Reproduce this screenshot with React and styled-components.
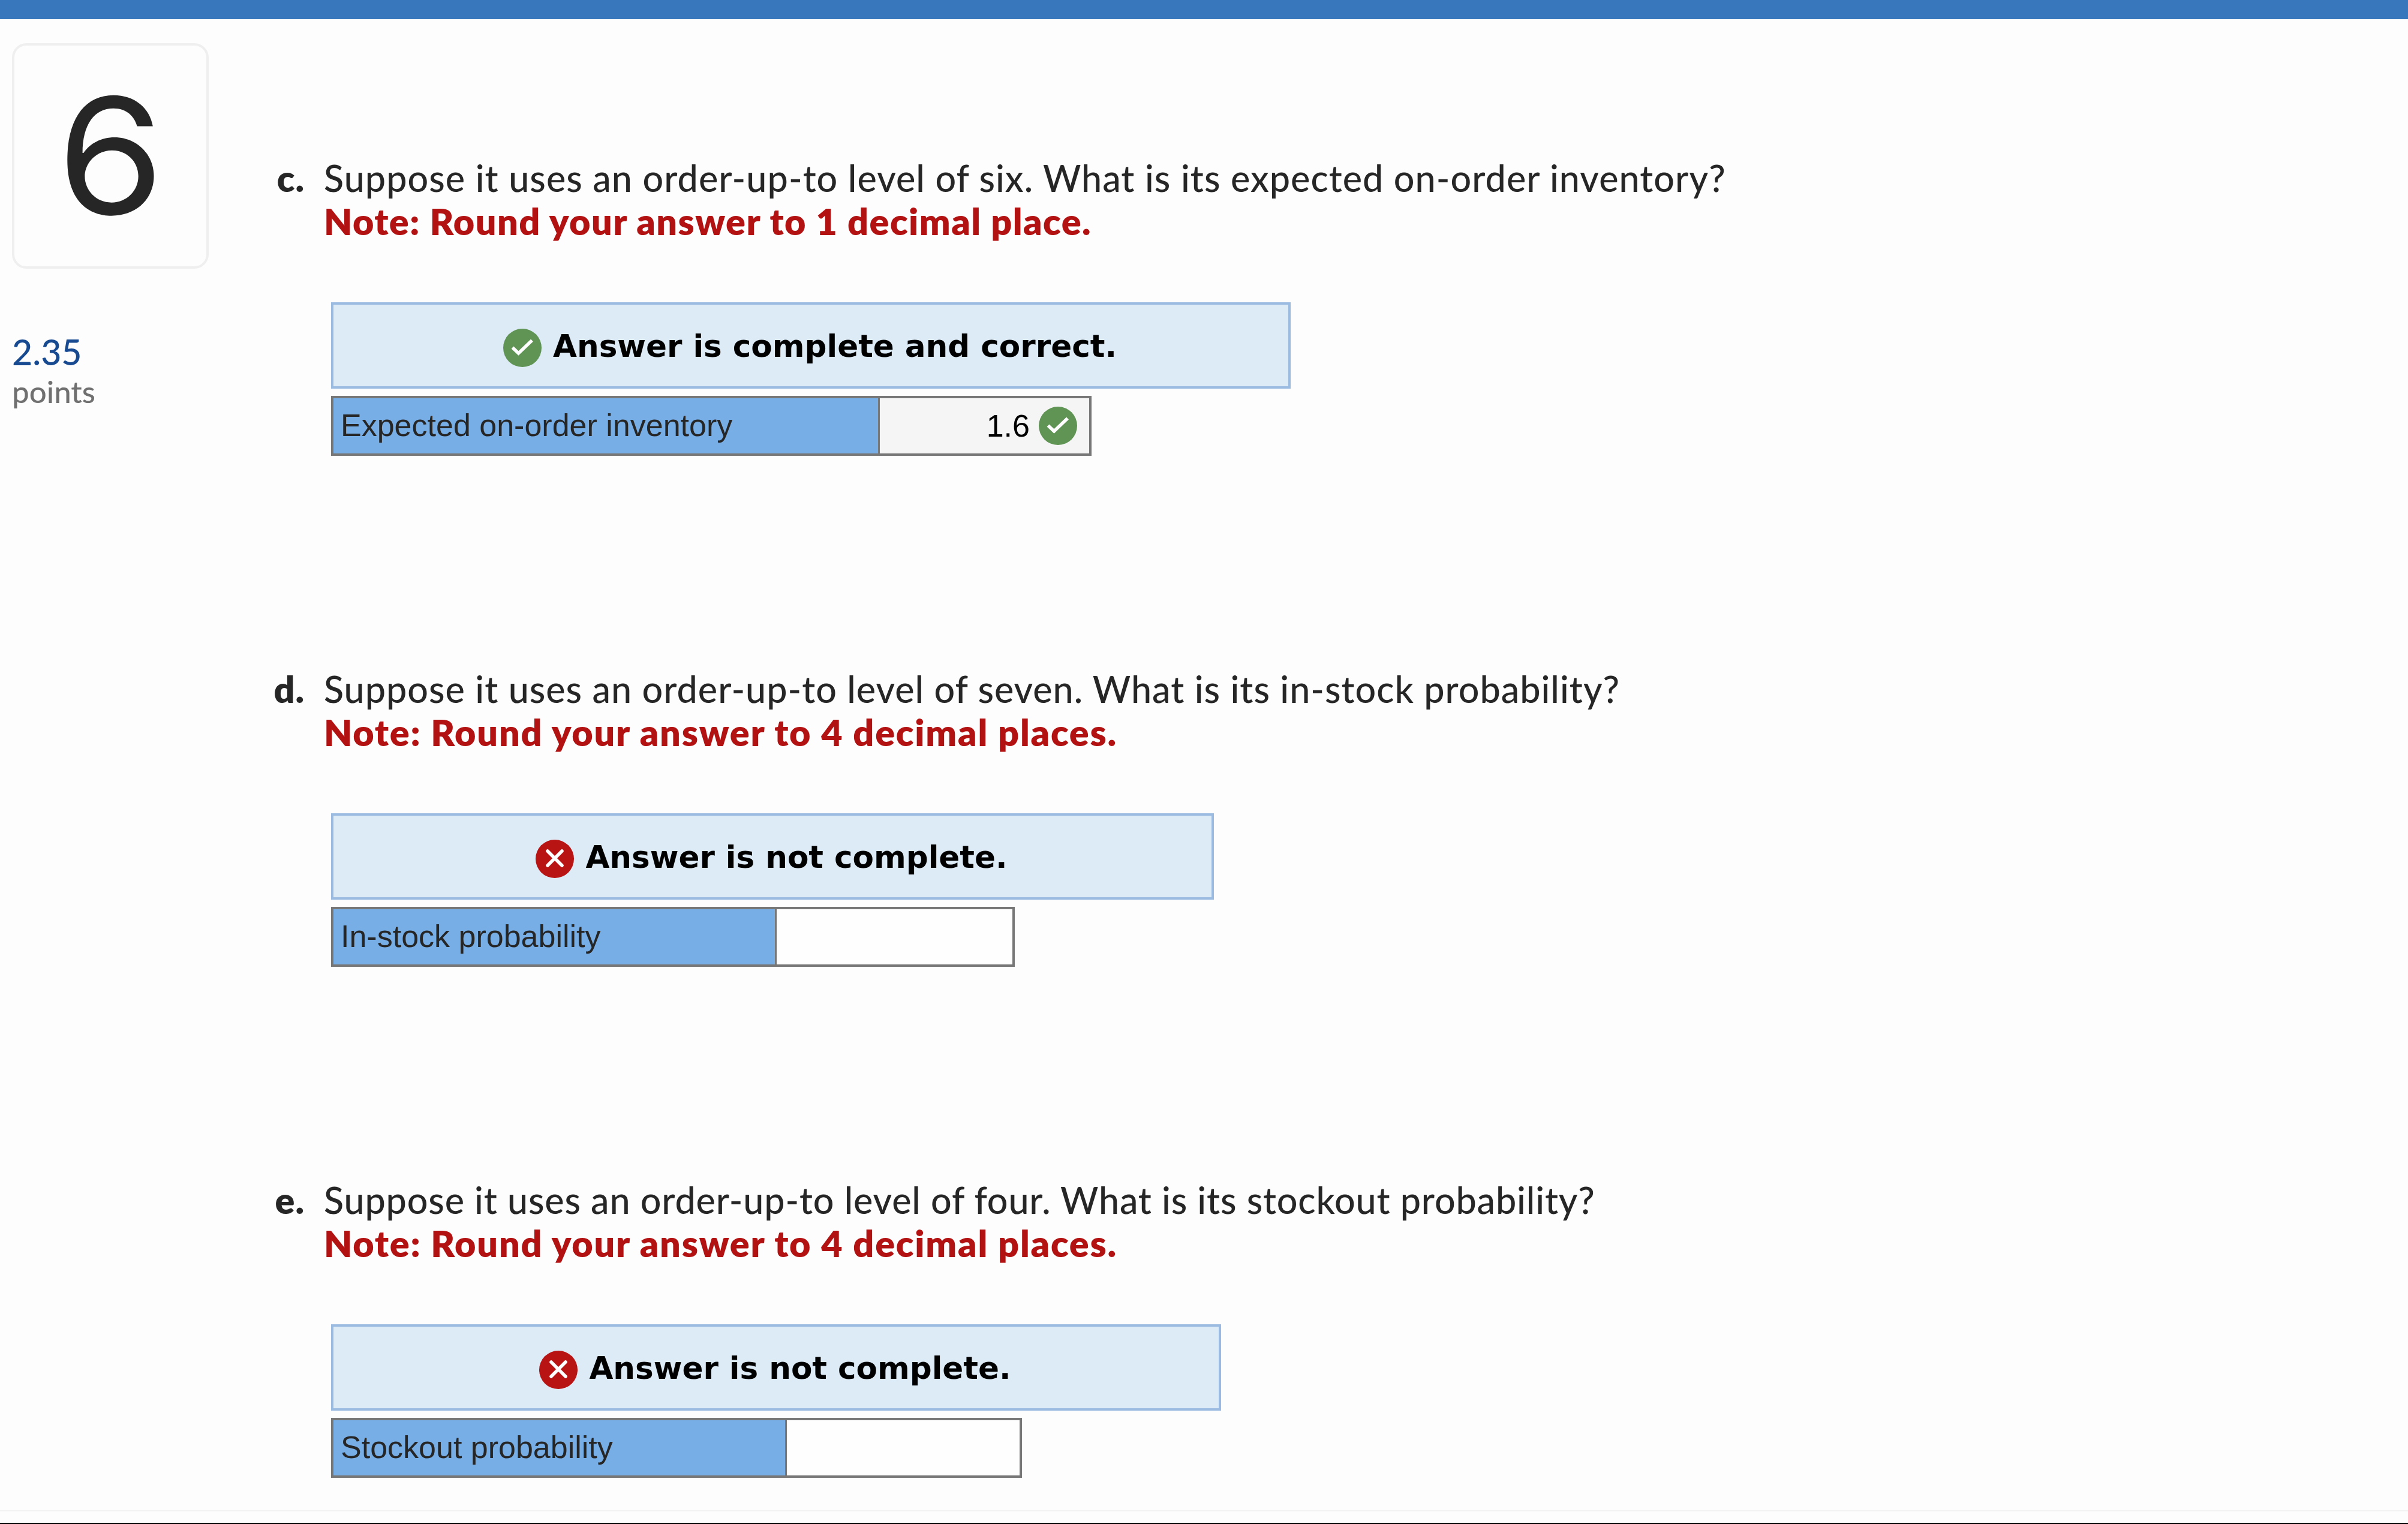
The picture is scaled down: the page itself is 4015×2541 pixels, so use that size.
import React, { Fragment } from 'react';
import styled, { createGlobalStyle } from 'styled-components';

const GlobalStyle = createGlobalStyle`
  body {
    margin: 0;
    background-color: #fdfdfd;
  }
`;

const Page = styled.div`
  box-sizing: border-box;
  display: flex;
  flex-direction: column;
  width: 4015px;
  height: 2541px;
  overflow: hidden;
  color: #262626;
  font-family: Lato, 'Open Sans', sans-serif;
`;

const TopBar = styled.div`
  flex: none;
  height: 32px;
  background-color: #3877bc;
`;

const Content = styled.div`
  display: flex;
  flex: none;
  box-sizing: border-box;
  height: 2488px;
  padding-left: 20px;
  border-bottom: 2px solid #f2f2f2;
`;

const BottomEdge = styled.div`
  flex: none;
  height: 2px;
  margin-top: 19px;
  background-color: #000;
`;

const Sidebar = styled.div`
  width: 328px;
  padding-top: 40px;
`;

const QuestionNumber = styled.div`
  box-sizing: border-box;
  height: 376px;
  border: 4px solid #efefef;
  border-radius: 24px;
  font-family: Inter, sans-serif;
  font-size: 269px;
  line-height: 366px;
  text-align: center;
`;

const Digit = styled.span`
  display: inline-block;
  transform: scaleX(1.07);
`;

const Points = styled.div`
  margin-top: 103px;
  color: #174a91;
  font-size: 59px;
  font-weight: 500;
  line-height: 72px;
`;

const PointsLabel = styled.div`
  margin-top: -1px;
  color: #707070;
  font-size: 51px;
  font-weight: 500;
  line-height: 62px;
`;

const Questions = styled.div`
  padding-top: 229px;
`;

const Question = styled.div`
  display: grid;
  grid-template-columns: 160px auto;
  column-gap: 32px;
  height: 852px;
  align-content: start;
`;

const Letter = styled.div`
  font-size: 61px;
  font-weight: 800;
  line-height: 72px;
  letter-spacing: 1px;
  text-align: right;
`;

const QuestionText = styled.div`
  font-size: 61px;
  font-weight: 500;
  line-height: 72px;
  letter-spacing: ${props => props.spacing}px;
  white-space: nowrap;
`;

const Note = styled(QuestionText)`
  color: #b31212;
  font-weight: 800;
`;

const Answer = styled.div`
  margin: 99px 0 0 12px;
`;

const Alert = styled.div`
  box-sizing: border-box;
  display: flex;
  align-items: center;
  justify-content: center;
  gap: 19px;
  width: ${props => props.width}px;
  height: 144px;
  padding: 8px 3px 0 0;
  border: 4px solid #9bbce0;
  background-color: #ddebf7;
`;

const AlertText = styled.div`
  margin-top: -7px;
  color: #000;
  font-family: 'DejaVu Sans', Verdana, sans-serif;
  font-size: 51.6px;
  font-weight: bold;
  line-height: 64px;
  white-space: nowrap;
`;

const AnswerRow = styled.div`
  box-sizing: border-box;
  display: flex;
  width: ${props => props.width}px;
  height: 100px;
  margin-top: 12px;
  border: 4px solid #777;
  font-family: 'Liberation Sans', Arial, sans-serif;
  font-size: 52px;
  line-height: 90px;
`;

const AnswerLabel = styled.div`
  box-sizing: border-box;
  flex: none;
  width: ${props => props.width}px;
  padding-left: 12px;
  border-right: 3px solid #777;
  background-color: #78aee6;
  white-space: nowrap;
`;

const AnswerValue = styled.div`
  display: flex;
  flex: 1;
  align-items: center;
  justify-content: flex-end;
  gap: 15px;
  padding-right: 20px;
  background-color: ${props => (props.isFilled ? '#f5f5f5' : '#fefefe')};
  color: #000;
`;

const Icon = styled.svg`
  display: block;
  flex: none;
  width: 64px;
  height: 64px;
`;

const CorrectIcon = () => (
  <Icon viewBox='0 0 64 64'>
    <circle cx='32' cy='32' r='32' fill='#5f9454' />
    <path
      d='M15.5 31.5 L25.5 41 L48 19.5'
      fill='none'
      stroke='#fff'
      strokeWidth='5.5'
    />
  </Icon>
);

const WrongIcon = () => (
  <Icon viewBox='0 0 64 64'>
    <circle cx='32' cy='32' r='32' fill='#b81414' />
    <path
      d='M20 19 L44 43 M44 19 L20 43'
      fill='none'
      stroke='#fff'
      strokeWidth='5.5'
      strokeLinecap='round'
    />
  </Icon>
);

const questions = [
  {
    letter: 'c.',
    text: 'Suppose it uses an order-up-to level of six. What is its expected on-order inventory?',
    note: 'Note: Round your answer to 1 decimal place.',
    spacing: 1.06,
    noteSpacing: 1.48,
    isCorrect: true,
    alert: 'Answer is complete and correct.',
    alertWidth: 1600,
    label: 'Expected on-order inventory',
    labelWidth: 911,
    rowWidth: 1268,
    value: '1.6',
  },
  {
    letter: 'd.',
    text: 'Suppose it uses an order-up-to level of seven. What is its in-stock probability?',
    note: 'Note: Round your answer to 4 decimal places.',
    spacing: 1.01,
    noteSpacing: 1.8,
    alert: 'Answer is not complete.',
    alertWidth: 1472,
    label: 'In-stock probability',
    labelWidth: 739,
    rowWidth: 1140,
  },
  {
    letter: 'e.',
    text: 'Suppose it uses an order-up-to level of four. What is its stockout probability?',
    note: 'Note: Round your answer to 4 decimal places.',
    spacing: 0.86,
    noteSpacing: 1.8,
    alert: 'Answer is not complete.',
    alertWidth: 1484,
    label: 'Stockout probability',
    labelWidth: 756,
    rowWidth: 1152,
  },
];

const QuestionItem = ({ question }) => (
  <Question>
    <Letter>{question.letter}</Letter>
    <div>
      <QuestionText spacing={question.spacing}>{question.text}</QuestionText>
      <Note spacing={question.noteSpacing}>{question.note}</Note>
      <Answer>
        <Alert width={question.alertWidth}>
          {question.isCorrect ? <CorrectIcon /> : <WrongIcon />}
          <AlertText>{question.alert}</AlertText>
        </Alert>
        <AnswerRow width={question.rowWidth}>
          <AnswerLabel width={question.labelWidth}>{question.label}</AnswerLabel>
          <AnswerValue isFilled={Boolean(question.value)}>
            {
              question.value ? (
                <Fragment>
                  <span>{question.value}</span>
                  <CorrectIcon />
                </Fragment>
              ) : null
            }
          </AnswerValue>
        </AnswerRow>
      </Answer>
    </div>
  </Question>
);

const App = () => (
  <Fragment>
    <GlobalStyle />
    <Page>
      <TopBar />
      <Content>
        <Sidebar>
          <QuestionNumber>
            <Digit>6</Digit>
          </QuestionNumber>
          <Points>2.35</Points>
          <PointsLabel>points</PointsLabel>
        </Sidebar>
        <Questions>
          {questions.map(question => (
            <QuestionItem key={question.letter} question={question} />
          ))}
        </Questions>
      </Content>
      <BottomEdge />
    </Page>
  </Fragment>
);

export default App;
